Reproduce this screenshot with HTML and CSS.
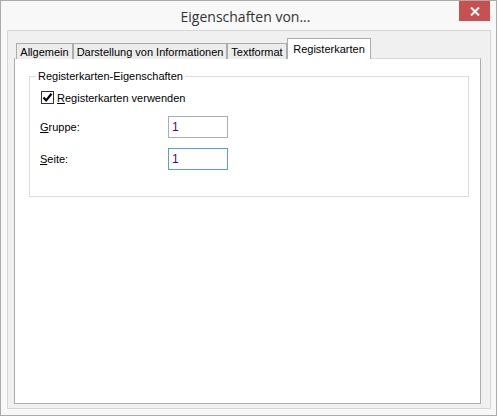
FILE: index.html
```html
<!DOCTYPE html>
<html lang="de">
<head>
    <meta charset="UTF-8">
    <title>Eigenschaften von...</title>
    <link rel="stylesheet" href="styles.css">
</head>
<body>
    <div class="window">
        <div class="titlebar">
            <span class="title">Eigenschaften von...</span>
            <button class="close-btn" title="Schließen">
                <svg width="10" height="9" viewBox="0 0 10 9">
                    <path d="M1 0.5 L9 8.5 M9 0.5 L1 8.5" stroke="#fff" stroke-width="2"/>
                </svg>
            </button>
        </div>

        <div class="frame">
            <div class="tabs">
                <div class="tab tab-allgemein">Allgemein</div>
                <div class="tab tab-darstellung">Darstellung von Informationen</div>
                <div class="tab tab-text">Textformat</div>
                <div class="tab tab-register active">Registerkarten</div>
            </div>

            <div class="panel">
                <fieldset class="group">
                    <legend>Registerkarten-Eigenschaften</legend>

                    <label class="check-row">
                        <span class="checkbox">
                            <svg width="11" height="11" viewBox="0 0 11 11">
                                <path d="M1.5 5.5 L4.2 8.4 L9.5 1.8" fill="none" stroke="#000" stroke-width="2.2"/>
                            </svg>
                        </span>
                        <span><u>R</u>egisterkarten verwenden</span>
                    </label>

                    <div class="field-row">
                        <span class="field-label"><u>G</u>ruppe:</span>
                        <input class="field" type="text" value="1">
                    </div>
                    <div class="field-row">
                        <span class="field-label"><u>S</u>eite:</span>
                        <input class="field focused" type="text" value="1">
                    </div>
                </fieldset>
            </div>
        </div>
    </div>
</body>
</html>
```

FILE: styles.css
```css
html, body {
    margin: 0;
    padding: 0;
    background: #f7f7f7;
}
body {
    font-family: "Liberation Sans", Arial, sans-serif;
    font-size: 11px;
    color: #000;
}
.window {
    width: 497px;
    height: 416px;
    box-sizing: border-box;
    border: 1px solid #ababab;
    background: #f8f8f8;
    display: flex;
    flex-direction: column;
}

/* title bar */
.titlebar {
    height: 29px;
    flex: none;
    display: grid;
    grid-template-columns: 1fr auto 1fr;
    padding-right: 6px;
}
.title {
    grid-column: 2;
    font-family: "Open Sans", "Liberation Sans", sans-serif;
    font-size: 14px;
    line-height: 31px;
    color: #333;
}
.close-btn {
    grid-column: 3;
    justify-self: end;
    align-self: start;
    width: 31px;
    height: 20px;
    margin: 0;
    padding: 0;
    border: none;
    background: #c75050;
    display: flex;
    align-items: center;
    justify-content: center;
}

/* inner frame holding the tab control */
.frame {
    flex: 1;
    margin: 0 5px 6px 6px;
    border: 1px solid #d6d6d6;
    background: #f0f0f0;
    padding: 7px 9px 4px 6px;
    display: flex;
    flex-direction: column;
}
.tabs {
    display: flex;
    align-items: flex-end;
    height: 21px;
    padding-left: 2px;
    margin-bottom: -1px;
    position: relative;
    z-index: 1;
}
.tab {
    box-sizing: border-box;
    height: 16px;
    border: 1px solid #acacac;
    border-bottom: none;
    background: #ececec;
    display: flex;
    justify-content: center;
    align-items: center;
    line-height: 14px;
    padding-top: 1px;
    white-space: nowrap;
}
.tab-allgemein { width: 57px; }
.tab-darstellung { width: 154px; }
.tab-text { width: 60px; }
.tab-register { width: 84px; }
.tab.active {
    height: 21px;
    background: #fff;
    align-items: flex-start;
    padding-top: 3px;
}

.panel {
    flex: 1;
    background: #fff;
    border: 1px solid #acacac;
    border-top-color: #d9d9d9;
}

/* group box */
.group {
    margin: 10px 11px 0 14px;
    padding: 0 0 26px 10px;
    border: 1px solid #dcdcdc;
}
.group legend {
    margin-left: -4px;
    padding: 0 2px;
    line-height: 14px;
}
.check-row {
    display: flex;
    align-items: center;
    gap: 3px;
    height: 17px;
    margin-top: 6px;
    padding-left: 1px;
}
.checkbox {
    box-sizing: border-box;
    width: 13px;
    height: 13px;
    border: 1px solid #333;
    background: #fff;
    display: flex;
    align-items: center;
    justify-content: center;
}
.field-row {
    display: flex;
    align-items: center;
    margin-top: 10px;
}
.field-label {
    width: 128px;
}
.field {
    box-sizing: border-box;
    width: 60px;
    height: 22px;
    margin: 0;
    padding: 0 3px;
    border: 1px solid #abadb3;
    font-family: "Liberation Sans", Arial, sans-serif;
    font-size: 12px;
    color: #40106a;
    outline: none;
}
.field.focused {
    border-color: #569de5;
}
```
